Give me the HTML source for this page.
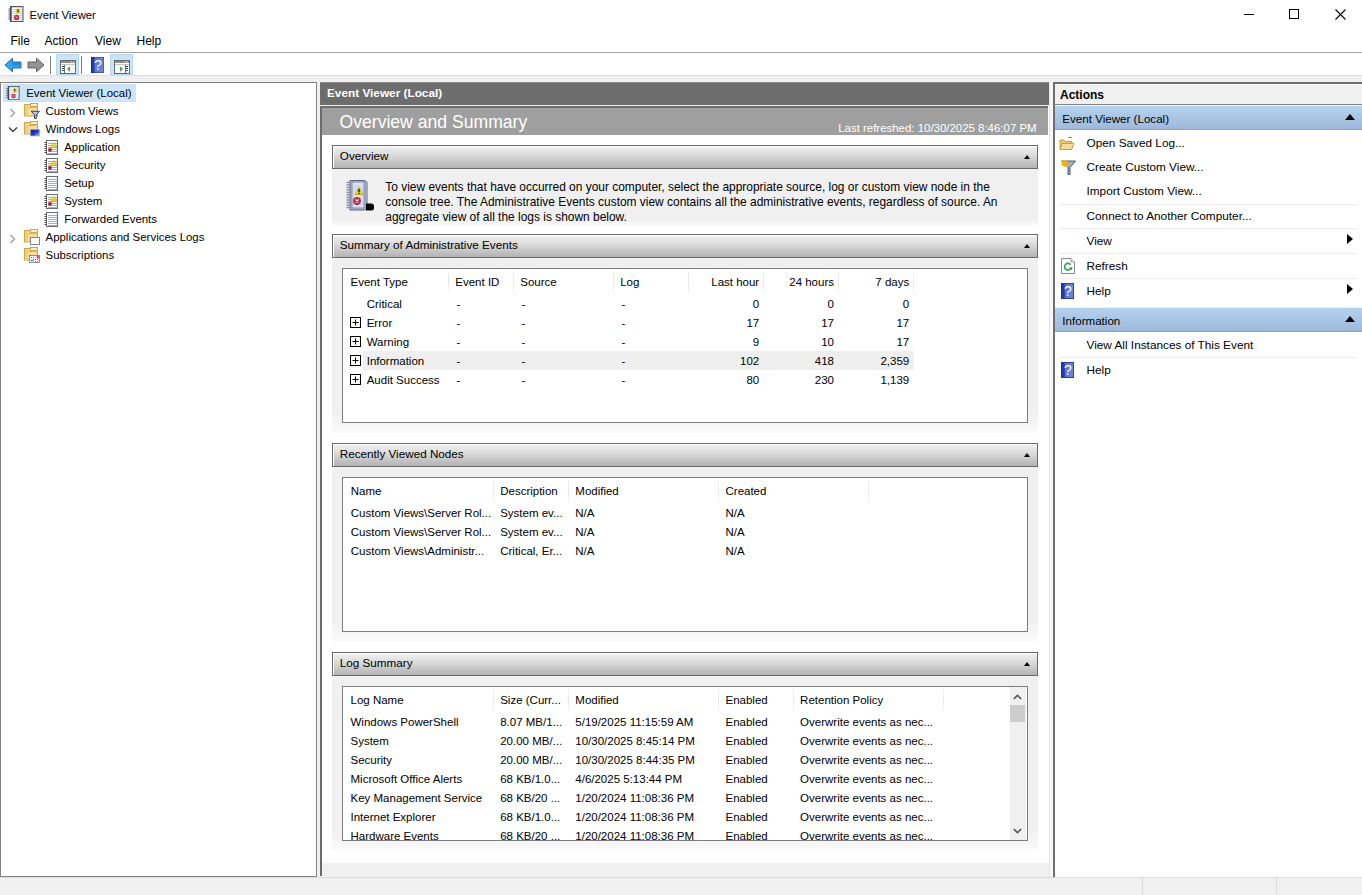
<!DOCTYPE html>
<html><head><meta charset="utf-8">
<style>
*{margin:0;padding:0;box-sizing:border-box}
html,body{width:1362px;height:895px;overflow:hidden;background:#fff;font-family:"Liberation Sans",sans-serif;color:#000}
.a{position:absolute}
.t{position:absolute;white-space:nowrap}
.sh{position:absolute;left:332px;width:706px;height:24px;border:1px solid #6a6a6a;background:linear-gradient(#f2f2f2,#dcdcdc 40%,#c0c0c0 80%,#b3b3b3);box-shadow:inset 1px 1px 0 #fff}
.up{position:absolute;width:0;height:0;border-left:3.5px solid transparent;border-right:3.5px solid transparent;border-bottom:4px solid #000}
.sc{position:absolute;left:332px;width:706px;background:linear-gradient(#f0f0f0,#f0f0f0 88%,#fbfbfb)}
.tbx{position:absolute;left:342px;width:686px;height:155px;border:1px solid #7d7d7d;background:#fff}
.cs{position:absolute;width:1px;height:23px;background:linear-gradient(#f4f4f4,#e6e6e6 50%,#f4f4f4)}
.bh{position:absolute;left:1055px;width:307px;height:25px;background:linear-gradient(#b4d3ee,#a9c6e4 50%,#9fb8da);border-top:1px solid #e8f2fb;border-bottom:1px solid #92a4bc}
.sep{position:absolute;left:1060px;width:297px;height:1px;background:#ececec}
</style></head><body>

<svg class="a" style="left:8px;top:6px" width="16" height="16" viewBox="0 0 16 16">
<rect x="2.5" y="0.5" width="12.5" height="15" fill="#c8d4f0" stroke="#4e586c"/>
<path d="M3 0.5v15" stroke="#3e4658" stroke-width="1.2"/>
<path d="M4 2.5h10M4 4.5h10M4 6.5h10M4 8.5h10M4 10.5h10M4 12.5h10M4 14.5h10" stroke="#fff" stroke-width="1"/>
<path d="M0.5 3h2M0.5 5h2M0.5 7h2M0.5 9h2M0.5 11h2M0.5 13h2" stroke="#505050" stroke-width="1"/>
<circle cx="10" cy="5.2" r="2.6" fill="#e8d020"/>
<path d="M10 3.2v3" stroke="#202000" stroke-width="1.1"/>
<circle cx="8.6" cy="11.4" r="2.6" fill="#c02c44"/>
<path d="M7.8 10.6l1.6 1.6M9.4 10.6l-1.6 1.6" stroke="#fff" stroke-width="0.7"/>
</svg>
<div class="t" style="left:29.5px;top:8.27px;font-size:11.3px;line-height:14px;color:#000;">Event Viewer</div>
<div class="a" style="left:1244px;top:14px;width:10px;height:1px;background:#000"></div>
<div class="a" style="left:1289px;top:9px;width:10px;height:10px;border:1px solid #000"></div>
<svg class="a" style="left:1335px;top:9px" width="11" height="11" viewBox="0 0 11 11"><path d="M0.5 0.5L10.5 10.5M10.5 0.5L0.5 10.5" stroke="#000" stroke-width="1.1"/></svg>
<div class="t" style="left:10.5px;top:33.73px;font-size:12px;line-height:14px;color:#000;">File</div>
<div class="t" style="left:44.5px;top:33.73px;font-size:12px;line-height:14px;color:#000;">Action</div>
<div class="t" style="left:95.0px;top:33.73px;font-size:12px;line-height:14px;color:#000;">View</div>
<div class="t" style="left:136.5px;top:33.73px;font-size:12px;line-height:14px;color:#000;">Help</div>
<div class="a" style="left:0px;top:52px;width:1362px;height:1px;background:#a5a5a5"></div>
<svg class="a" style="left:4px;top:57px" width="18" height="16" viewBox="0 0 18 16"><path d="M1 8L8.5 1.2V5H17V11H8.5V14.8z" fill="#33a6ec" stroke="#1a5ea8" stroke-width="0.9"/><path d="M8.5 6H16V8.5H8.5z" fill="#1578cf" opacity="0.6"/></svg>
<svg class="a" style="left:27px;top:57px" width="18" height="16" viewBox="0 0 18 16"><path d="M17 8L9.5 1.2V5H1V11H9.5V14.8z" fill="#949494" stroke="#555" stroke-width="0.9"/></svg>
<div class="a" style="left:50px;top:56px;width:1px;height:18px;background:#7a7a7a"></div>
<div class="a" style="left:56px;top:54px;width:23px;height:21px;background:#cce4f7;border:1px solid #b6d6f2"></div>
<svg class="a" style="left:60px;top:60px" width="16" height="14" viewBox="0 0 16 14"><rect x="0.5" y="0.5" width="15" height="13" fill="#fff" stroke="#6a6a6a"/><rect x="1" y="1" width="14" height="2" fill="#8c8c8c"/><rect x="11" y="1.5" width="1" height="1" fill="#fff"/><rect x="13" y="1.5" width="1" height="1" fill="#fff"/><rect x="1" y="4" width="14" height="1" fill="#c4c4c4"/><path d="M4.5 5v8.5" stroke="#6a6a6a"/><rect x="2" y="6" width="2" height="1" fill="#3c4660"/><rect x="2" y="8" width="2" height="1" fill="#3c4660"/><rect x="2" y="10" width="2" height="1" fill="#3c4660"/><path d="M7 9L10 6.2V11.8z" fill="#3aa83a"/><rect x="11" y="5" width="4" height="8" fill="#f4f8f0"/></svg>
<div class="a" style="left:81px;top:56px;width:1px;height:18px;background:#7a7a7a"></div>
<svg class="a" style="left:91px;top:57px" width="13" height="16" viewBox="0 0 13 16"><defs><linearGradient id="hg" x1="0" x2="1"><stop offset="0" stop-color="#1a2f8a"/><stop offset="0.25" stop-color="#2a46b0"/><stop offset="0.3" stop-color="#5a74d0"/><stop offset="1" stop-color="#7088dc"/></linearGradient></defs><rect x="0" y="0" width="13" height="16" fill="url(#hg)" stroke="#10288a" stroke-width="0.8"/><text x="6.8" y="13.2" font-family="Liberation Sans" font-size="14" fill="#fff" text-anchor="middle">?</text></svg>
<div class="a" style="left:110px;top:54px;width:23px;height:21px;background:#cce4f7;border:1px solid #b6d6f2"></div>
<svg class="a" style="left:114px;top:60px" width="16" height="14" viewBox="0 0 16 14"><rect x="0.5" y="0.5" width="15" height="13" fill="#fff" stroke="#6a6a6a"/><rect x="1" y="1" width="14" height="2" fill="#8c8c8c"/><rect x="11" y="1.5" width="1" height="1" fill="#fff"/><rect x="13" y="1.5" width="1" height="1" fill="#fff"/><rect x="1" y="4" width="14" height="1" fill="#c4c4c4"/><path d="M11.5 5v8.5" stroke="#6a6a6a"/><rect x="12" y="6" width="2" height="1" fill="#3c4660"/><rect x="12" y="8" width="2" height="1" fill="#3c4660"/><rect x="12" y="10" width="2" height="1" fill="#3c4660"/><path d="M9 9L6 6.2V11.8z" fill="#3aa83a"/></svg>
<div class="a" style="left:0px;top:75px;width:1362px;height:802px;background:#f0f0f0;border-top:1px solid #dedede"></div>
<div class="a" style="left:0px;top:877px;width:1362px;height:18px;background:#f0f0f0;border-top:1px solid #dcdcdc"></div>
<div class="a" style="left:1142px;top:878px;width:1px;height:17px;background:#dadada"></div>
<div class="a" style="left:1276px;top:878px;width:1px;height:17px;background:#dadada"></div>
<div class="a" style="left:0px;top:82px;width:317px;height:795px;background:#fff;border:1px solid #828282"></div>
<div class="a" style="left:3px;top:84px;width:133px;height:18px;background:#cde4f7"></div>
<svg class="a" style="left:6px;top:86px" width="14" height="14" viewBox="0 0 16 16">
<rect x="2.5" y="0.5" width="12.5" height="15" fill="#c8d4f0" stroke="#4e586c"/>
<path d="M3 0.5v15" stroke="#3e4658" stroke-width="1.2"/>
<path d="M4 2.5h10M4 4.5h10M4 6.5h10M4 8.5h10M4 10.5h10M4 12.5h10M4 14.5h10" stroke="#fff" stroke-width="1"/>
<path d="M0.5 3h2M0.5 5h2M0.5 7h2M0.5 9h2M0.5 11h2M0.5 13h2" stroke="#505050" stroke-width="1"/>
<circle cx="10" cy="5.2" r="2.6" fill="#e8d020"/>
<path d="M10 3.2v3" stroke="#202000" stroke-width="1.1"/>
<circle cx="8.6" cy="11.4" r="2.6" fill="#c02c44"/>
<path d="M7.8 10.6l1.6 1.6M9.4 10.6l-1.6 1.6" stroke="#fff" stroke-width="0.7"/>
</svg>
<div class="t" style="left:26.2px;top:85.82px;font-size:11.45px;line-height:14px;color:#000;">Event Viewer (Local)</div>
<svg class="a" style="left:24px;top:103px" width="16" height="16" viewBox="0 0 16 16">
<rect x="0.5" y="1.5" width="13" height="11.5" fill="#f6dc96" stroke="#cfa650"/>
<rect x="6.5" y="0.5" width="7" height="3" fill="#fbf0c4" stroke="#cfa650"/>
<rect x="1" y="2" width="3" height="10.5" fill="#f2cf70"/>
<path d="M4 4.5h9.5" stroke="#dcb868"/>
<path d="M7.3 8.3h8.2l-3.2 3.4v4h-1.8v-4z" fill="#c4c4ec" stroke="#2a3260" stroke-width="0.9"/></svg>
<div class="t" style="left:45.5px;top:103.82px;font-size:11.45px;line-height:14px;color:#000;">Custom Views</div>
<svg class="a" style="left:9px;top:108px" width="7" height="10" viewBox="0 0 7 10"><path d="M1.5 1L5.5 5L1.5 9" fill="none" stroke="#a0a0a0" stroke-width="1.3"/></svg>
<svg class="a" style="left:24px;top:121px" width="16" height="16" viewBox="0 0 16 16">
<rect x="0.5" y="1.5" width="13" height="11.5" fill="#f6dc96" stroke="#cfa650"/>
<rect x="6.5" y="0.5" width="7" height="3" fill="#fbf0c4" stroke="#cfa650"/>
<rect x="1" y="2" width="3" height="10.5" fill="#f2cf70"/>
<path d="M4 4.5h9.5" stroke="#dcb868"/>
<defs><linearGradient id="mon" x1="0" x2="1" y1="0" y2="1"><stop offset="0" stop-color="#0010b8"/><stop offset="0.55" stop-color="#2040d0"/><stop offset="1" stop-color="#c0c8f0"/></linearGradient></defs><rect x="6.5" y="8.5" width="9" height="6.5" fill="url(#mon)" stroke="#a0a8b8" stroke-width="0.7"/></svg>
<div class="t" style="left:45.5px;top:121.82px;font-size:11.45px;line-height:14px;color:#000;">Windows Logs</div>
<svg class="a" style="left:8px;top:126px" width="10" height="7" viewBox="0 0 10 7"><path d="M1 1.5L5 5.5L9 1.5" fill="none" stroke="#404040" stroke-width="1.4"/></svg>
<svg class="a" style="left:44px;top:140px" width="15" height="15" viewBox="0 0 15 15">
<rect x="2.5" y="0.5" width="11" height="14" fill="#fafbff" stroke="#6a6e7c"/>
<path d="M4 3.5h9M4 5.5h9M4 7.5h9M4 9.5h9M4 11.5h9M4 13.5h9" stroke="#98a4bc" stroke-width="0.9"/>
<path d="M0.5 2.5h2.5M0.5 4.5h2.5M0.5 6.5h2.5M0.5 8.5h2.5M0.5 10.5h2.5M0.5 12.5h2.5" stroke="#4a4a4a" stroke-width="1"/>
<path d="M9.8 2.2L12.6 6.8H7z" fill="#f0d830" stroke="#d0b000" stroke-width="0.6"/><circle cx="6" cy="9.8" r="1.9" fill="#a82030"/></svg>
<div class="t" style="left:64.2px;top:139.82px;font-size:11.45px;line-height:14px;color:#000;">Application</div>
<svg class="a" style="left:44px;top:158px" width="15" height="15" viewBox="0 0 15 15">
<rect x="2.5" y="0.5" width="11" height="14" fill="#fafbff" stroke="#6a6e7c"/>
<path d="M4 3.5h9M4 5.5h9M4 7.5h9M4 9.5h9M4 11.5h9M4 13.5h9" stroke="#98a4bc" stroke-width="0.9"/>
<path d="M0.5 2.5h2.5M0.5 4.5h2.5M0.5 6.5h2.5M0.5 8.5h2.5M0.5 10.5h2.5M0.5 12.5h2.5" stroke="#4a4a4a" stroke-width="1"/>
<path d="M9.8 2.2L12.6 6.8H7z" fill="#f0d830" stroke="#d0b000" stroke-width="0.6"/><circle cx="6" cy="9.8" r="1.9" fill="#a82030"/></svg>
<div class="t" style="left:64.2px;top:157.82px;font-size:11.45px;line-height:14px;color:#000;">Security</div>
<svg class="a" style="left:44px;top:176px" width="15" height="15" viewBox="0 0 15 15">
<rect x="2.5" y="0.5" width="11" height="14" fill="#fafbff" stroke="#6a6e7c"/>
<path d="M4 3.5h9M4 5.5h9M4 7.5h9M4 9.5h9M4 11.5h9M4 13.5h9" stroke="#98a4bc" stroke-width="0.9"/>
<path d="M0.5 2.5h2.5M0.5 4.5h2.5M0.5 6.5h2.5M0.5 8.5h2.5M0.5 10.5h2.5M0.5 12.5h2.5" stroke="#4a4a4a" stroke-width="1"/>
</svg>
<div class="t" style="left:64.2px;top:175.82px;font-size:11.45px;line-height:14px;color:#000;">Setup</div>
<svg class="a" style="left:44px;top:194px" width="15" height="15" viewBox="0 0 15 15">
<rect x="2.5" y="0.5" width="11" height="14" fill="#fafbff" stroke="#6a6e7c"/>
<path d="M4 3.5h9M4 5.5h9M4 7.5h9M4 9.5h9M4 11.5h9M4 13.5h9" stroke="#98a4bc" stroke-width="0.9"/>
<path d="M0.5 2.5h2.5M0.5 4.5h2.5M0.5 6.5h2.5M0.5 8.5h2.5M0.5 10.5h2.5M0.5 12.5h2.5" stroke="#4a4a4a" stroke-width="1"/>
<path d="M9.8 2.2L12.6 6.8H7z" fill="#f0d830" stroke="#d0b000" stroke-width="0.6"/><circle cx="6" cy="9.8" r="1.9" fill="#a82030"/></svg>
<div class="t" style="left:64.2px;top:193.82px;font-size:11.45px;line-height:14px;color:#000;">System</div>
<svg class="a" style="left:44px;top:212px" width="15" height="15" viewBox="0 0 15 15">
<rect x="2.5" y="0.5" width="11" height="14" fill="#fafbff" stroke="#6a6e7c"/>
<path d="M4 3.5h9M4 5.5h9M4 7.5h9M4 9.5h9M4 11.5h9M4 13.5h9" stroke="#98a4bc" stroke-width="0.9"/>
<path d="M0.5 2.5h2.5M0.5 4.5h2.5M0.5 6.5h2.5M0.5 8.5h2.5M0.5 10.5h2.5M0.5 12.5h2.5" stroke="#4a4a4a" stroke-width="1"/>
</svg>
<div class="t" style="left:64.2px;top:211.82px;font-size:11.45px;line-height:14px;color:#000;">Forwarded Events</div>
<svg class="a" style="left:24px;top:229px" width="16" height="16" viewBox="0 0 16 16">
<rect x="0.5" y="1.5" width="13" height="11.5" fill="#f6dc96" stroke="#cfa650"/>
<rect x="6.5" y="0.5" width="7" height="3" fill="#fbf0c4" stroke="#cfa650"/>
<rect x="1" y="2" width="3" height="10.5" fill="#f2cf70"/>
<path d="M4 4.5h9.5" stroke="#dcb868"/>
<rect x="6.5" y="8.5" width="9" height="7" fill="#fff" stroke="#7a7a7a" stroke-width="0.9"/></svg>
<div class="t" style="left:45.5px;top:229.82px;font-size:11.45px;line-height:14px;color:#000;">Applications and Services Logs</div>
<svg class="a" style="left:9px;top:234px" width="7" height="10" viewBox="0 0 7 10"><path d="M1.5 1L5.5 5L1.5 9" fill="none" stroke="#a0a0a0" stroke-width="1.3"/></svg>
<svg class="a" style="left:24px;top:247px" width="16" height="16" viewBox="0 0 16 16">
<rect x="0.5" y="1.5" width="13" height="11.5" fill="#f6dc96" stroke="#cfa650"/>
<rect x="6.5" y="0.5" width="7" height="3" fill="#fbf0c4" stroke="#cfa650"/>
<rect x="1" y="2" width="3" height="10.5" fill="#f2cf70"/>
<path d="M4 4.5h9.5" stroke="#dcb868"/>
<rect x="5.5" y="8.5" width="10" height="7" fill="#fff" stroke="#7a7a7a" stroke-width="0.8"/><rect x="12.5" y="8.5" width="3" height="3" fill="#e05070"/><path d="M7 13l1.2 1.2 2-2.4" stroke="#203060" fill="none" stroke-width="0.9"/><path d="M7 10.5h1M9 10.5h1M11 12.5h1M13 12.5h1M11 14.5h1M13 14.5h1" stroke="#607080"/></svg>
<div class="t" style="left:45.5px;top:247.82px;font-size:11.45px;line-height:14px;color:#000;">Subscriptions</div>
<div class="a" style="left:320px;top:82px;width:729px;height:794px;background:#fff;border-left:2px solid #6a6a6a"></div>
<div class="a" style="left:1049px;top:82px;width:4px;height:795px;background:#f7f7f7;border-left:1px solid #e4e4e4"></div>
<div class="a" style="left:320px;top:82px;width:729px;height:23px;background:#6d6d6d;border-top:1px solid #888"></div>
<div class="t" style="left:327.0px;top:86.30px;font-size:11.8px;line-height:14px;color:#fff;font-weight:bold;">Event Viewer (Local)</div>
<div class="a" style="left:320px;top:105px;width:729px;height:1px;background:#f4f4f4"></div>
<div class="a" style="left:320px;top:106px;width:728px;height:29px;background:#9f9f9f;border-top:2px solid #6c6c6c;border-left:2px solid #6c6c6c"></div>
<div class="t" style="left:339.5px;top:111.88px;font-size:17.6px;line-height:21px;color:#fff;">Overview and Summary</div>
<div class="t" style="left:838.2px;top:120.62px;font-size:11.45px;line-height:14px;color:#fff;">Last refreshed: 10/30/2025 8:46:07 PM</div>
<div class="sh" style="top:145px"></div>
<div class="t" style="left:339.8px;top:149.13px;font-size:11.7px;line-height:14px;color:#000;">Overview</div>
<div class="up" style="left:1024px;top:155px"></div>
<div class="sc" style="top:169px;height:57px"></div>
<svg class="a" style="left:345px;top:179px" width="30" height="33" viewBox="0 0 30 33">
<path d="M5 1.5h14l3 1.5v27l-3 1h-14z" fill="#b8c2dc" stroke="#5a6484" stroke-width="1"/>
<rect x="7" y="3" width="12" height="26" fill="#dce4f4" stroke="#6a7496" stroke-width="0.8"/>
<path d="M19 3l3 0.5v26l-3 -0.5z" fill="#9aa4c0"/>
<path d="M8 7h10M8 10h10M8 13h10M8 16h10M8 19h10M8 22h10M8 25h10" stroke="#c4cce8" stroke-width="1"/>
<path d="M1.5 3.5h4M1.5 6h4M1.5 8.5h4M1.5 11h4M1.5 13.5h4M1.5 16h4M1.5 18.5h4M1.5 21h4M1.5 23.5h4M1.5 26h4M1.5 28.5h4" stroke="#8a90a4" stroke-width="1.3"/>
<path d="M14 8L18 15.5H10z" fill="#f2d818" stroke="#b8a000" stroke-width="0.6"/>
<path d="M14 10v3.2M14 14v1" stroke="#000" stroke-width="1.3"/>
<circle cx="12" cy="22" r="3.7" fill="#c82a3a" stroke="#901828" stroke-width="0.5"/>
<path d="M10.4 20.4l3.2 3.2M13.6 20.4l-3.2 3.2" stroke="#fff" stroke-width="1.1"/>
<path d="M21 24.5h5a3 3 0 0 1 3 3v1.5a2.5 2.5 0 0 1 -2.5 2.5h-5.5z" fill="#000"/>
</svg>
<div class="t" style="left:385.3px;top:180.05px;font-size:11.95px;line-height:14px;color:#000;">To view events that have occurred on your computer, select the appropriate source, log or custom view node in the</div>
<div class="t" style="left:385.3px;top:195.25px;font-size:11.95px;line-height:14px;color:#000;">console tree. The Administrative Events custom view contains all the administrative events, regardless of source. An</div>
<div class="t" style="left:385.3px;top:210.45px;font-size:11.95px;line-height:14px;color:#000;">aggregate view of all the logs is shown below.</div>
<div class="sh" style="top:234px"></div>
<div class="t" style="left:339.8px;top:238.13px;font-size:11.7px;line-height:14px;color:#000;">Summary of Administrative Events</div>
<div class="up" style="left:1024px;top:244px"></div>
<div class="sc" style="top:258px;height:175px"></div>
<div class="sh" style="top:443px"></div>
<div class="t" style="left:339.8px;top:447.13px;font-size:11.7px;line-height:14px;color:#000;">Recently Viewed Nodes</div>
<div class="up" style="left:1024px;top:453px"></div>
<div class="sc" style="top:467px;height:175px"></div>
<div class="sh" style="top:652px"></div>
<div class="t" style="left:339.8px;top:656.13px;font-size:11.7px;line-height:14px;color:#000;">Log Summary</div>
<div class="up" style="left:1024px;top:662px"></div>
<div class="sc" style="top:676px;height:175px"></div>
<div class="a" style="left:322px;top:863px;width:727px;height:13px;background:#f0f0f0"></div>
<div class="tbx" style="top:268px"></div>
<div class="cs" style="left:448px;top:270px"></div>
<div class="cs" style="left:513px;top:270px"></div>
<div class="cs" style="left:613px;top:270px"></div>
<div class="cs" style="left:688px;top:270px"></div>
<div class="cs" style="left:763px;top:270px"></div>
<div class="cs" style="left:838px;top:270px"></div>
<div class="cs" style="left:913px;top:270px"></div>
<div class="t" style="left:350.5px;top:275.20px;font-size:11.5px;line-height:14px;color:#000;">Event Type</div>
<div class="t" style="left:455.3px;top:275.20px;font-size:11.5px;line-height:14px;color:#000;">Event ID</div>
<div class="t" style="left:520.3px;top:275.20px;font-size:11.5px;line-height:14px;color:#000;">Source</div>
<div class="t" style="left:620.2px;top:275.20px;font-size:11.5px;line-height:14px;color:#000;">Log</div>
<div class="t" style="right:602.8px;top:275.20px;font-size:11.5px;line-height:14px;color:#000;text-align:right">Last hour</div>
<div class="t" style="right:528.0px;top:275.20px;font-size:11.5px;line-height:14px;color:#000;text-align:right">24 hours</div>
<div class="t" style="right:452.8px;top:275.20px;font-size:11.5px;line-height:14px;color:#000;text-align:right">7 days</div>
<div class="a" style="left:363px;top:351px;width:551px;height:19px;background:#efefef"></div>
<div class="t" style="left:366.7px;top:297.20px;font-size:11.5px;line-height:14px;color:#000;">Critical</div>
<div class="t" style="left:456.5px;top:297.20px;font-size:11.5px;line-height:14px;color:#000;">-</div>
<div class="t" style="left:521.5px;top:297.20px;font-size:11.5px;line-height:14px;color:#000;">-</div>
<div class="t" style="left:621.5px;top:297.20px;font-size:11.5px;line-height:14px;color:#000;">-</div>
<div class="t" style="right:602.8px;top:297.20px;font-size:11.5px;line-height:14px;color:#000;text-align:right">0</div>
<div class="t" style="right:528.0px;top:297.20px;font-size:11.5px;line-height:14px;color:#000;text-align:right">0</div>
<div class="t" style="right:452.8px;top:297.20px;font-size:11.5px;line-height:14px;color:#000;text-align:right">0</div>
<div class="t" style="left:366.7px;top:316.20px;font-size:11.5px;line-height:14px;color:#000;">Error</div>
<svg class="a" style="left:350px;top:317px" width="11" height="11" viewBox="0 0 11 11"><rect x="0.5" y="0.5" width="10" height="10" fill="none" stroke="#000"/><path d="M2.5 5.5h6M5.5 2.5v6" stroke="#000"/></svg>
<div class="t" style="left:456.5px;top:316.20px;font-size:11.5px;line-height:14px;color:#000;">-</div>
<div class="t" style="left:521.5px;top:316.20px;font-size:11.5px;line-height:14px;color:#000;">-</div>
<div class="t" style="left:621.5px;top:316.20px;font-size:11.5px;line-height:14px;color:#000;">-</div>
<div class="t" style="right:602.8px;top:316.20px;font-size:11.5px;line-height:14px;color:#000;text-align:right">17</div>
<div class="t" style="right:528.0px;top:316.20px;font-size:11.5px;line-height:14px;color:#000;text-align:right">17</div>
<div class="t" style="right:452.8px;top:316.20px;font-size:11.5px;line-height:14px;color:#000;text-align:right">17</div>
<div class="t" style="left:366.7px;top:335.20px;font-size:11.5px;line-height:14px;color:#000;">Warning</div>
<svg class="a" style="left:350px;top:336px" width="11" height="11" viewBox="0 0 11 11"><rect x="0.5" y="0.5" width="10" height="10" fill="none" stroke="#000"/><path d="M2.5 5.5h6M5.5 2.5v6" stroke="#000"/></svg>
<div class="t" style="left:456.5px;top:335.20px;font-size:11.5px;line-height:14px;color:#000;">-</div>
<div class="t" style="left:521.5px;top:335.20px;font-size:11.5px;line-height:14px;color:#000;">-</div>
<div class="t" style="left:621.5px;top:335.20px;font-size:11.5px;line-height:14px;color:#000;">-</div>
<div class="t" style="right:602.8px;top:335.20px;font-size:11.5px;line-height:14px;color:#000;text-align:right">9</div>
<div class="t" style="right:528.0px;top:335.20px;font-size:11.5px;line-height:14px;color:#000;text-align:right">10</div>
<div class="t" style="right:452.8px;top:335.20px;font-size:11.5px;line-height:14px;color:#000;text-align:right">17</div>
<div class="t" style="left:366.7px;top:354.20px;font-size:11.5px;line-height:14px;color:#000;">Information</div>
<svg class="a" style="left:350px;top:355px" width="11" height="11" viewBox="0 0 11 11"><rect x="0.5" y="0.5" width="10" height="10" fill="none" stroke="#000"/><path d="M2.5 5.5h6M5.5 2.5v6" stroke="#000"/></svg>
<div class="t" style="left:456.5px;top:354.20px;font-size:11.5px;line-height:14px;color:#000;">-</div>
<div class="t" style="left:521.5px;top:354.20px;font-size:11.5px;line-height:14px;color:#000;">-</div>
<div class="t" style="left:621.5px;top:354.20px;font-size:11.5px;line-height:14px;color:#000;">-</div>
<div class="t" style="right:602.8px;top:354.20px;font-size:11.5px;line-height:14px;color:#000;text-align:right">102</div>
<div class="t" style="right:528.0px;top:354.20px;font-size:11.5px;line-height:14px;color:#000;text-align:right">418</div>
<div class="t" style="right:452.8px;top:354.20px;font-size:11.5px;line-height:14px;color:#000;text-align:right">2,359</div>
<div class="t" style="left:366.7px;top:373.20px;font-size:11.5px;line-height:14px;color:#000;">Audit Success</div>
<svg class="a" style="left:350px;top:374px" width="11" height="11" viewBox="0 0 11 11"><rect x="0.5" y="0.5" width="10" height="10" fill="none" stroke="#000"/><path d="M2.5 5.5h6M5.5 2.5v6" stroke="#000"/></svg>
<div class="t" style="left:456.5px;top:373.20px;font-size:11.5px;line-height:14px;color:#000;">-</div>
<div class="t" style="left:521.5px;top:373.20px;font-size:11.5px;line-height:14px;color:#000;">-</div>
<div class="t" style="left:621.5px;top:373.20px;font-size:11.5px;line-height:14px;color:#000;">-</div>
<div class="t" style="right:602.8px;top:373.20px;font-size:11.5px;line-height:14px;color:#000;text-align:right">80</div>
<div class="t" style="right:528.0px;top:373.20px;font-size:11.5px;line-height:14px;color:#000;text-align:right">230</div>
<div class="t" style="right:452.8px;top:373.20px;font-size:11.5px;line-height:14px;color:#000;text-align:right">1,139</div>
<div class="tbx" style="top:477px"></div>
<div class="cs" style="left:493px;top:479px"></div>
<div class="cs" style="left:568px;top:479px"></div>
<div class="cs" style="left:718px;top:479px"></div>
<div class="cs" style="left:868px;top:479px"></div>
<div class="t" style="left:350.8px;top:484.20px;font-size:11.5px;line-height:14px;color:#000;">Name</div>
<div class="t" style="left:500.2px;top:484.20px;font-size:11.5px;line-height:14px;color:#000;">Description</div>
<div class="t" style="left:575.3px;top:484.20px;font-size:11.5px;line-height:14px;color:#000;">Modified</div>
<div class="t" style="left:725.5px;top:484.20px;font-size:11.5px;line-height:14px;color:#000;">Created</div>
<div class="t" style="left:350.8px;top:506.20px;font-size:11.5px;line-height:14px;color:#000;">Custom Views\Server Rol...</div>
<div class="t" style="left:500.2px;top:506.20px;font-size:11.5px;line-height:14px;color:#000;">System ev...</div>
<div class="t" style="left:575.3px;top:506.20px;font-size:11.5px;line-height:14px;color:#000;">N/A</div>
<div class="t" style="left:725.5px;top:506.20px;font-size:11.5px;line-height:14px;color:#000;">N/A</div>
<div class="t" style="left:350.8px;top:525.20px;font-size:11.5px;line-height:14px;color:#000;">Custom Views\Server Rol...</div>
<div class="t" style="left:500.2px;top:525.20px;font-size:11.5px;line-height:14px;color:#000;">System ev...</div>
<div class="t" style="left:575.3px;top:525.20px;font-size:11.5px;line-height:14px;color:#000;">N/A</div>
<div class="t" style="left:725.5px;top:525.20px;font-size:11.5px;line-height:14px;color:#000;">N/A</div>
<div class="t" style="left:350.8px;top:544.20px;font-size:11.5px;line-height:14px;color:#000;">Custom Views\Administr...</div>
<div class="t" style="left:500.2px;top:544.20px;font-size:11.5px;line-height:14px;color:#000;">Critical, Er...</div>
<div class="t" style="left:575.3px;top:544.20px;font-size:11.5px;line-height:14px;color:#000;">N/A</div>
<div class="t" style="left:725.5px;top:544.20px;font-size:11.5px;line-height:14px;color:#000;">N/A</div>
<div class="tbx" style="top:686px"></div>
<div class="cs" style="left:493px;top:688px"></div>
<div class="cs" style="left:568px;top:688px"></div>
<div class="cs" style="left:718px;top:688px"></div>
<div class="cs" style="left:793px;top:688px"></div>
<div class="cs" style="left:943px;top:688px"></div>
<div class="t" style="left:350.5px;top:693.20px;font-size:11.5px;line-height:14px;color:#000;">Log Name</div>
<div class="t" style="left:500.2px;top:693.20px;font-size:11.5px;line-height:14px;color:#000;">Size (Curr...</div>
<div class="t" style="left:575.3px;top:693.20px;font-size:11.5px;line-height:14px;color:#000;">Modified</div>
<div class="t" style="left:725.5px;top:693.20px;font-size:11.5px;line-height:14px;color:#000;">Enabled</div>
<div class="t" style="left:800.1px;top:693.20px;font-size:11.5px;line-height:14px;color:#000;">Retention Policy</div>
<div class="a" style="left:343px;top:687px;width:684px;height:153px;overflow:hidden">
<div class="t" style="left:7.5px;top:28.20px;font-size:11.5px;line-height:14px">Windows PowerShell</div>
<div class="t" style="left:157.2px;top:28.20px;font-size:11.5px;line-height:14px">8.07 MB/1...</div>
<div class="t" style="left:232.3px;top:28.20px;font-size:11.5px;line-height:14px">5/19/2025 11:15:59 AM</div>
<div class="t" style="left:382.5px;top:28.20px;font-size:11.5px;line-height:14px">Enabled</div>
<div class="t" style="left:457.1px;top:28.20px;font-size:11.5px;line-height:14px">Overwrite events as nec...</div>
<div class="t" style="left:7.5px;top:47.20px;font-size:11.5px;line-height:14px">System</div>
<div class="t" style="left:157.2px;top:47.20px;font-size:11.5px;line-height:14px">20.00 MB/...</div>
<div class="t" style="left:232.3px;top:47.20px;font-size:11.5px;line-height:14px">10/30/2025 8:45:14 PM</div>
<div class="t" style="left:382.5px;top:47.20px;font-size:11.5px;line-height:14px">Enabled</div>
<div class="t" style="left:457.1px;top:47.20px;font-size:11.5px;line-height:14px">Overwrite events as nec...</div>
<div class="t" style="left:7.5px;top:66.20px;font-size:11.5px;line-height:14px">Security</div>
<div class="t" style="left:157.2px;top:66.20px;font-size:11.5px;line-height:14px">20.00 MB/...</div>
<div class="t" style="left:232.3px;top:66.20px;font-size:11.5px;line-height:14px">10/30/2025 8:44:35 PM</div>
<div class="t" style="left:382.5px;top:66.20px;font-size:11.5px;line-height:14px">Enabled</div>
<div class="t" style="left:457.1px;top:66.20px;font-size:11.5px;line-height:14px">Overwrite events as nec...</div>
<div class="t" style="left:7.5px;top:85.20px;font-size:11.5px;line-height:14px">Microsoft Office Alerts</div>
<div class="t" style="left:157.2px;top:85.20px;font-size:11.5px;line-height:14px">68 KB/1.0...</div>
<div class="t" style="left:232.3px;top:85.20px;font-size:11.5px;line-height:14px">4/6/2025 5:13:44 PM</div>
<div class="t" style="left:382.5px;top:85.20px;font-size:11.5px;line-height:14px">Enabled</div>
<div class="t" style="left:457.1px;top:85.20px;font-size:11.5px;line-height:14px">Overwrite events as nec...</div>
<div class="t" style="left:7.5px;top:104.20px;font-size:11.5px;line-height:14px">Key Management Service</div>
<div class="t" style="left:157.2px;top:104.20px;font-size:11.5px;line-height:14px">68 KB/20 ...</div>
<div class="t" style="left:232.3px;top:104.20px;font-size:11.5px;line-height:14px">1/20/2024 11:08:36 PM</div>
<div class="t" style="left:382.5px;top:104.20px;font-size:11.5px;line-height:14px">Enabled</div>
<div class="t" style="left:457.1px;top:104.20px;font-size:11.5px;line-height:14px">Overwrite events as nec...</div>
<div class="t" style="left:7.5px;top:123.20px;font-size:11.5px;line-height:14px">Internet Explorer</div>
<div class="t" style="left:157.2px;top:123.20px;font-size:11.5px;line-height:14px">68 KB/1.0...</div>
<div class="t" style="left:232.3px;top:123.20px;font-size:11.5px;line-height:14px">1/20/2024 11:08:36 PM</div>
<div class="t" style="left:382.5px;top:123.20px;font-size:11.5px;line-height:14px">Enabled</div>
<div class="t" style="left:457.1px;top:123.20px;font-size:11.5px;line-height:14px">Overwrite events as nec...</div>
<div class="t" style="left:7.5px;top:142.20px;font-size:11.5px;line-height:14px">Hardware Events</div>
<div class="t" style="left:157.2px;top:142.20px;font-size:11.5px;line-height:14px">68 KB/20 ...</div>
<div class="t" style="left:232.3px;top:142.20px;font-size:11.5px;line-height:14px">1/20/2024 11:08:36 PM</div>
<div class="t" style="left:382.5px;top:142.20px;font-size:11.5px;line-height:14px">Enabled</div>
<div class="t" style="left:457.1px;top:142.20px;font-size:11.5px;line-height:14px">Overwrite events as nec...</div>
<div class="a" style="left:667px;top:0;width:16px;height:153px;background:#f0f0f0"></div>
<svg class="a" style="left:669px;top:6px" width="11" height="8"><path d="M1.8 6L5.5 2.3L9.2 6" fill="none" stroke="#505050" stroke-width="1.6"/></svg>
<div class="a" style="left:667px;top:18px;width:15px;height:17px;background:#cdcdcd"></div>
<svg class="a" style="left:669px;top:140px" width="11" height="8"><path d="M1.8 2L5.5 5.7L9.2 2" fill="none" stroke="#505050" stroke-width="1.6"/></svg>
</div>
<div class="a" style="left:1053px;top:82px;width:309px;height:795px;background:#fff;border-left:2px solid #6f6f6f;border-top:2px solid #6f6f6f"></div>
<div class="a" style="left:1055px;top:84px;width:307px;height:21px;background:#f0f0f0;border-top:1px solid #fff;border-bottom:1px solid #858585"></div>
<div class="t" style="left:1060.0px;top:87.73px;font-size:12px;line-height:14px;color:#000;font-weight:bold;">Actions</div>
<div class="bh" style="top:105px"></div>
<div class="t" style="left:1062.3px;top:111.87px;font-size:11.6px;line-height:14px;color:#000;">Event Viewer (Local)</div>
<div class="a" style="left:1345px;top:114px;width:0;height:0;border-left:5px solid transparent;border-right:5px solid transparent;border-bottom:6px solid #000"></div>
<div class="t" style="left:1086.5px;top:135.90px;font-size:11.8px;line-height:14px;color:#000;">Open Saved Log...</div>
<div class="t" style="left:1086.5px;top:160.10px;font-size:11.8px;line-height:14px;color:#000;">Create Custom View...</div>
<div class="t" style="left:1086.5px;top:183.80px;font-size:11.8px;line-height:14px;color:#000;">Import Custom View...</div>
<div class="t" style="left:1086.5px;top:209.20px;font-size:11.8px;line-height:14px;color:#000;">Connect to Another Computer...</div>
<div class="t" style="left:1086.5px;top:233.70px;font-size:11.8px;line-height:14px;color:#000;">View</div>
<div class="t" style="left:1086.5px;top:259.10px;font-size:11.8px;line-height:14px;color:#000;">Refresh</div>
<div class="t" style="left:1086.5px;top:284.00px;font-size:11.8px;line-height:14px;color:#000;">Help</div>
<div class="sep" style="top:204px"></div>
<div class="sep" style="top:228px"></div>
<div class="sep" style="top:253px"></div>
<div class="sep" style="top:278px"></div>
<svg class="a" style="left:1347px;top:234px" width="6" height="10" viewBox="0 0 6 10"><path d="M0 0L6 5L0 10z" fill="#000"/></svg>
<svg class="a" style="left:1347px;top:284px" width="6" height="10" viewBox="0 0 6 10"><path d="M0 0L6 5L0 10z" fill="#000"/></svg>
<div class="bh" style="top:307px"></div>
<div class="t" style="left:1062.3px;top:314.17px;font-size:11.6px;line-height:14px;color:#000;">Information</div>
<div class="a" style="left:1345px;top:316px;width:0;height:0;border-left:5px solid transparent;border-right:5px solid transparent;border-bottom:6px solid #000"></div>
<div class="t" style="left:1086.5px;top:337.80px;font-size:11.8px;line-height:14px;color:#000;">View All Instances of This Event</div>
<div class="t" style="left:1086.5px;top:363.00px;font-size:11.8px;line-height:14px;color:#000;">Help</div>
<div class="sep" style="top:357px"></div>
<svg class="a" style="left:1059px;top:136px" width="16" height="15" viewBox="0 0 16 15"><path d="M1 4h4l1.5 1.5H13V13H1z" fill="#e8c870" stroke="#b89040" stroke-width="0.8"/><path d="M3 7.5h12L12.5 13.5H1z" fill="#f5dc98" stroke="#b89040" stroke-width="0.8"/><path d="M9 1.5h4" stroke="#888"/></svg>
<svg class="a" style="left:1061px;top:160px" width="15" height="16" viewBox="0 0 15 16"><path d="M0.5 1h14L9 7.5V14.5H7V7.5z" fill="#a8b0c0" stroke="#303a58" stroke-width="0.8"/><circle cx="4" cy="3.5" r="3.2" fill="#f2b400"/></svg>
<svg class="a" style="left:1061px;top:258px" width="14" height="16" viewBox="0 0 14 16"><path d="M0.5 0.5h9.5l3.5 3.5v11.5h-13z" fill="#fff" stroke="#8a8a8a"/><path d="M10 0.5v3.5h3.5" fill="#f0f0f0" stroke="#9a9a9a"/><path d="M9.8 10.2A3.3 3.3 0 1 1 9.6 6.8" fill="none" stroke="#34a84c" stroke-width="1.7"/><path d="M8.3 9.2L11.6 9.4L10.6 12.4z" fill="#2a9a40"/></svg>
<svg class="a" style="left:1061px;top:283px" width="13" height="16" viewBox="0 0 13 16"><rect x="0.4" y="0.4" width="12.2" height="15.2" fill="url(#hg)" stroke="#10288a" stroke-width="0.8"/><text x="6.8" y="13.2" font-family="Liberation Sans" font-size="14" fill="#fff" text-anchor="middle">?</text></svg>
<svg class="a" style="left:1061px;top:362px" width="13" height="16" viewBox="0 0 13 16"><rect x="0.4" y="0.4" width="12.2" height="15.2" fill="url(#hg)" stroke="#10288a" stroke-width="0.8"/><text x="6.8" y="13.2" font-family="Liberation Sans" font-size="14" fill="#fff" text-anchor="middle">?</text></svg>
</body></html>
